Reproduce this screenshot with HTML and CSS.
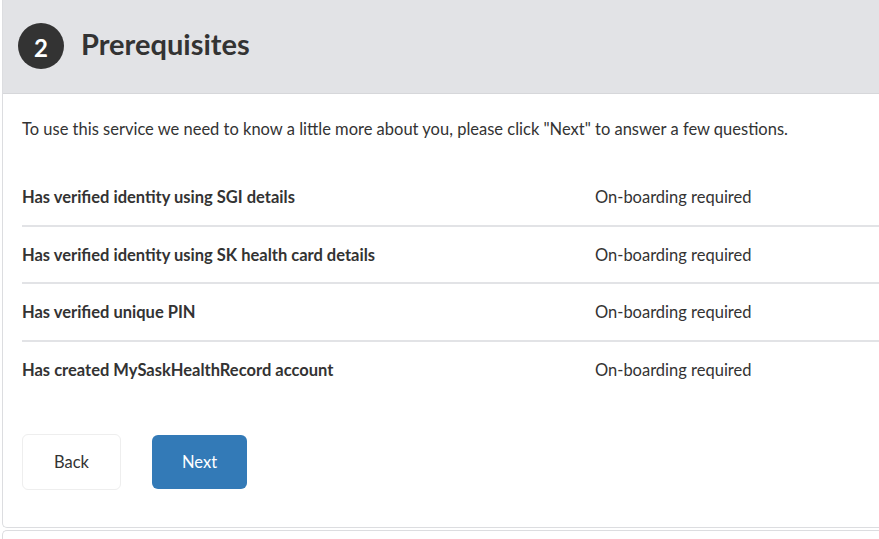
FILE: index.html
```html
<!DOCTYPE html>
<html lang="en">
<head>
  <meta charset="UTF-8">
  <meta name="viewport" content="width=device-width, initial-scale=1.0">
  <title>Prerequisites</title>
  <link rel="stylesheet" href="styles.css">
</head>
<body>
  <div class="card">
    <div class="card-header">
      <span class="step">2</span>
      <h2>Prerequisites</h2>
    </div>

    <div class="card-body">
      <p class="intro">To use this service we need to know a little more about you, please click "Next" to answer a few questions.</p>

      <div class="checks">
        <div class="check">
          <div class="check-name">Has verified identity using SGI details</div>
          <div class="check-status">On-boarding required</div>
        </div>
        <div class="check">
          <div class="check-name">Has verified identity using SK health card details</div>
          <div class="check-status">On-boarding required</div>
        </div>
        <div class="check">
          <div class="check-name">Has verified unique PIN</div>
          <div class="check-status">On-boarding required</div>
        </div>
        <div class="check">
          <div class="check-name">Has created MySaskHealthRecord account</div>
          <div class="check-status">On-boarding required</div>
        </div>
      </div>

      <div class="actions">
        <button class="btn btn-back">Back</button>
        <button class="btn btn-next">Next</button>
      </div>
    </div>
  </div>

  <div class="card card-next"></div>
</body>
</html>
```

FILE: styles.css
```css
body {
  font-family: Lato, "Open Sans", sans-serif;
  color: #333;
  background-color: #fff;
  margin: 0;
  padding: 0 0 0 2px;
  overflow: hidden;
}

.card {
  border: 1px solid #dcdde0;
  border-top: none;
  border-right: none;
  border-radius: 0 0 0 5px;
}

.card-header {
  display: flex;
  align-items: center;
  height: 94px;
  padding-left: 15px;
  background-color: #e2e3e6;
  border-bottom: 1px solid #d6d7da;
  box-sizing: border-box;
}

.step {
  display: flex;
  align-items: center;
  justify-content: center;
  width: 46px;
  height: 46px;
  margin-top: -2px;
  border-radius: 50%;
  background-color: #333;
  color: #fff;
  font-size: 24px;
  font-weight: bold;
  padding-top: 3px;
  box-sizing: border-box;
}

.card-header h2 {
  margin: 0 0 6px 17px;
  font-size: 29px;
  font-weight: bold;
  color: #333;
}

.card-body {
  padding: 23px 0 37px 19px;
}

.intro {
  margin: 0 0 28px 0;
  font-size: 16.5px;
  line-height: 24px;
}

.check {
  display: grid;
  grid-template-columns: 573px 1fr;
  padding: 17px 0 16.5px 0;
  font-size: 16.5px;
  line-height: 22px;
  border-bottom: 2px solid #e2e3e6;
}

.check:last-child {
  border-bottom: none;
}

.check-name {
  font-weight: bold;
}

.actions {
  display: flex;
  align-items: center;
  gap: 31px;
  margin-top: 37px;
}

.btn {
  font-family: inherit;
  font-size: 16.5px;
  border-radius: 6px;
  cursor: pointer;
}

.btn-back {
  height: 56px;
  padding: 0 31px;
  background-color: #fff;
  color: #333;
  border: 1px solid #eeeeee;
}

.btn-next {
  height: 54px;
  padding: 0 30px;
  background-color: #337ab7;
  color: #fff;
  border: none;
}

.card-next {
  margin-top: 2px;
  height: 20px;
  border-top: 1px solid #dcdde0;
  border-radius: 5px 0 0 0;
}
```
